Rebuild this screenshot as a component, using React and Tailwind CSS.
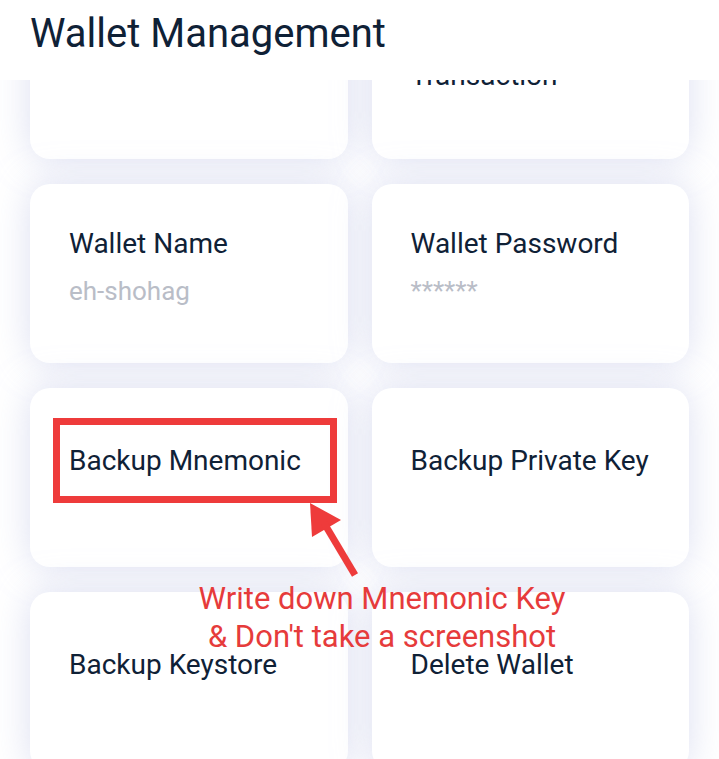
const cards = [
  { title: ["Wallet Address"], pt: "pt-[48px]" },
  { title: ["Speed Up", "Transaction"], pt: "pt-[48px]" },
  { title: ["Wallet Name"], sub: "eh-shohag", pt: "pt-[44px]" },
  { title: ["Wallet Password"], sub: "******", pt: "pt-[44px]" },
  { title: ["Backup Mnemonic"], pt: "pt-[57px]" },
  { title: ["Backup Private Key"], pt: "pt-[57px]" },
  { title: ["Backup Keystore"], pt: "pt-[57px]" },
  { title: ["Delete Wallet"], pt: "pt-[57px]" },
];

const Card = ({ card }) => (
  <div className={`h-[179px] rounded-[20px] bg-white pl-[39px] shadow-[0_0_36px_rgba(196,202,232,0.6)] ${card.pt}`}>
    {card.title.map((line) => (
      <p key={line} className="text-[28px] leading-[32px] text-[#0f2136]">
        {line}
      </p>
    ))}
    {card.sub && (
      <p className="mt-[16px] text-[26px] leading-[30px] text-[#b9bdc7]">{card.sub}</p>
    )}
  </div>
);

const App = () => {
  return (
    <div className="relative h-[759px] w-full overflow-hidden bg-white font-['Roboto','Liberation_Sans',sans-serif]">
      <header className="absolute inset-x-0 top-0 z-10 h-20 bg-white pl-[30px] pt-[11px]">
        <h1 className="text-[40px] leading-[46px] text-[#0f2136]">Wallet Management</h1>
      </header>

      <div className="-mt-[20px] grid grid-cols-2 gap-x-6 gap-y-[25px] px-[30px]">
        {cards.map((card) => (
          <Card key={card.title.join(" ")} card={card} />
        ))}
      </div>

      {/* annotation drawn over the screenshot */}
      <div className="absolute left-[53px] top-[418px] z-20 h-[85px] w-[284px] border-[7px] border-[#ee3b3b]" />
      <svg className="absolute left-0 top-0 z-20" width="719" height="759" viewBox="0 0 719 759">
        <polygon points="310,503 312,537 341,520" fill="#ee3b3b" />
        <line x1="324" y1="523" x2="355" y2="575" stroke="#ee3b3b" strokeWidth="7" />
      </svg>
      <div className="absolute left-[382px] top-[580px] z-20 -translate-x-1/2 whitespace-nowrap text-center text-[31px] leading-[38px] text-[#e63b3b]">
        <p>Write down Mnemonic Key</p>
        <p>&amp; Don't take a screenshot</p>
      </div>
    </div>
  );
};

export default App;
